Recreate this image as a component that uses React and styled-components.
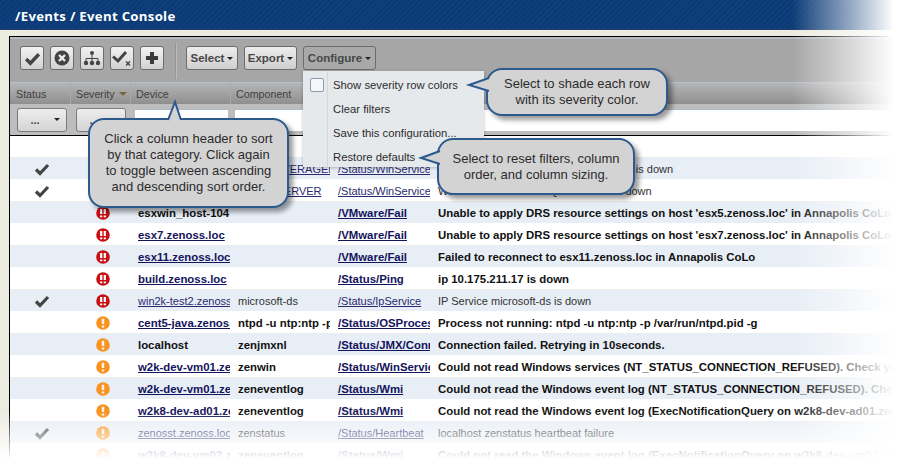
import React from "react";
import styled, { createGlobalStyle } from "styled-components";

const GlobalStyle = createGlobalStyle`
  html, body {
    margin: 0;
    padding: 0;
    background: #ffffff;
    font-family: "Liberation Sans", Arial, sans-serif;
  }
`;

const Page = styled.div`
  position: relative;
  width: 897px;
  height: 463px;
  overflow: hidden;
  background: #ecebe0;
`;

const TitleBar = styled.div`
  height: 30px;
  box-sizing: border-box;
  padding: 2px 0 0 15px;
  display: flex;
  align-items: center;
  border-bottom: 1px solid #1d3f6b;
  background: repeating-linear-gradient(135deg, #0c3a74 0 2px, #0f3f7c 2px 4px);
`;

const Title = styled.h1`
  margin: 0;
  font-family: "Open Sans", sans-serif;
  font-size: 13.2px;
  font-weight: 700;
  letter-spacing: 0.3px;
  color: #ffffff;
`;

const Panel = styled.div`
  margin: 6px 0 0 9px;
  border-top: 1px solid #000;
  border-left: 1px solid #000;
  background: #ffffff;
`;

const Toolbar = styled.div`
  height: 45px;
  box-sizing: border-box;
  padding: 7px 0 0 10px;
  display: flex;
  align-items: flex-start;
  gap: 6px;
  background: #a6a6a6;
  border-top: 2px solid #b3bac1;
`;

const IconButton = styled.button`
  width: 24px;
  height: 24px;
  padding: 0;
  display: flex;
  align-items: center;
  justify-content: center;
  border: 1px solid #6c6c6c;
  border-radius: 3px;
  background: linear-gradient(#f2f2f2, #d2d2d2);
`;

const Divider = styled.div`
  width: 1px;
  height: 36px;
  margin: -3px 3px 0 5px;
  background: #bcbcbc;
  border-left: 1px solid #969696;
`;

const MenuButton = styled.button`
  height: 24px;
  width: ${(p) => p.$width}px;
  padding: 0;
  display: flex;
  align-items: center;
  justify-content: center;
  gap: 3px;
  border: 1px solid #6c6c6c;
  border-radius: 3px;
  background: ${(p) =>
    p.$open ? "#a9a9a9" : "linear-gradient(#ededed, #cfcfcf)"};
  font-family: "Liberation Sans", sans-serif;
  font-size: 11.5px;
  font-weight: 700;
  color: #474747;
`;

const Caret = styled.span`
  width: 0;
  height: 0;
  border-left: 3px solid transparent;
  border-right: 3px solid transparent;
  border-top: 3px solid #222;
`;

const HeaderRow = styled.div`
  height: 21px;
  display: grid;
  grid-template-columns: 60px 60px 100px 100px 100px 1fr;
  align-items: center;
  border-top: 1px solid #b4c0cc;
  background: linear-gradient(#b5b5b5, #8f8f8f);
`;

const HeaderCell = styled.div`
  height: 100%;
  box-sizing: border-box;
  padding-left: ${(p) => (p.$first ? 6 : 5)}px;
  display: flex;
  align-items: center;
  gap: 4px;
  border-left: ${(p) => (p.$first ? "none" : "1px solid #a9a9a9")};
  font-size: 10.7px;
  color: #3f3f3f;
`;

const SortMark = styled.span`
  width: 0;
  height: 0;
  border-left: 4px solid transparent;
  border-right: 4px solid transparent;
  border-top: 4px solid #7a6340;
`;

const FilterRow = styled.div`
  height: 32px;
  box-sizing: border-box;
  display: grid;
  grid-template-columns: 60px 60px 100px 100px 100px 1fr;
  align-items: center;
  background: #bdbdbd;
  border-bottom: 1px solid #000;
`;

const FilterSlot = styled.div`
  padding: 0 ${(p) => (p.$last ? "0" : "2px")} 0 ${(p) => p.$left}px;
`;

const FilterSelect = styled.div`
  width: 50px;
  height: 24px;
  box-sizing: border-box;
  display: flex;
  align-items: center;
  justify-content: center;
  gap: 14px;
  border: 1px solid #7b7b7b;
  border-radius: 3px;
  background: linear-gradient(#eeeeee, #d4d4d4);
  font-size: 11px;
  font-weight: 700;
  color: #444;
  padding-left: 6px;
`;

const FilterInput = styled.div`
  height: 21px;
  border-top: 1px solid #a9bacb;
  background: #ffffff;
`;

const SpacerRow = styled.div`
  height: 22px;
  box-sizing: border-box;
  background: #ffffff;
  border-bottom: 1px solid #ececec;
`;

const Row = styled.div`
  height: 22px;
  box-sizing: border-box;
  display: grid;
  grid-template-columns: 60px 60px 100px 100px 100px 1fr;
  align-items: center;
  background: ${(p) => (p.$alt ? "#e7eef6" : "#ffffff")};
  border-bottom: 1px solid ${(p) => (p.$alt ? "#ffffff" : "#ececec")};
  font-size: ${(p) => (p.$bold ? 11.4 : 11)}px;
  font-weight: ${(p) => (p.$bold ? 700 : 400)};
  color: ${(p) => (p.$bold ? "#111" : "#333")};
`;

const IconCell = styled.div`
  display: flex;
  justify-content: center;
  align-items: center;
  padding-left: ${(p) => p.$shift}px;
`;

const TextCell = styled.div`
  overflow: hidden;
  white-space: nowrap;
  padding: 1px 0 0 8px;
`;

const RowLink = styled.a`
  color: ${(p) => (p.$bold ? "#14145c" : "#2a2a6c")};
  text-decoration: underline;
`;

const Menu = styled.div`
  position: absolute;
  left: 303px;
  top: 71px;
  width: 181px;
  height: 96px;
  background: linear-gradient(90deg, #e6e9ec 24px, #d4d7da 24px, #d4d7da 25px, #e6e9ec 25px);
  box-shadow: 0 1px 3px rgba(0, 0, 0, 0.25);
  display: flex;
  flex-direction: column;
  padding: 2px 0 0 30px;
  box-sizing: border-box;
`;

const MenuItem = styled.div`
  position: relative;
  height: 24px;
  flex: none;
  display: flex;
  align-items: center;
  font-size: 11.3px;
  color: #2c2c2c;
`;

const MenuCheck = styled.span`
  position: absolute;
  left: -23px;
  top: 5px;
  width: 12px;
  height: 12px;
  border: 1px solid #8a9bb0;
  border-radius: 2px;
  background: #f4f6fa;
`;

const Callout = styled.div`
  position: absolute;
  left: ${(p) => p.$x}px;
  top: ${(p) => p.$y}px;
  width: ${(p) => p.$w}px;
  height: ${(p) => p.$h}px;
  box-sizing: border-box;
  display: flex;
  flex-direction: column;
  align-items: center;
  justify-content: center;
  background: #d3d3d3;
  border: 2px solid #2c5a8c;
  border-radius: 16px;
  box-shadow: 4px 4px 5px rgba(0, 0, 0, 0.4);
  font-size: 13px;
  line-height: 16px;
  color: #2b2b2b;
  text-align: center;
`;

const Tail = styled.svg`
  position: absolute;
  overflow: visible;
  left: ${(p) => p.$x}px;
  top: ${(p) => p.$y}px;
`;

const FadeRight = styled.div`
  position: absolute;
  top: 0;
  right: 0;
  bottom: 0;
  width: 105px;
  background: linear-gradient(90deg, rgba(255, 255, 255, 0), rgba(255, 255, 255, 0.55) 55%, #fff 97%);
`;

const FadeBottom = styled.div`
  position: absolute;
  left: 0;
  right: 0;
  bottom: 0;
  height: 52px;
  background: linear-gradient(rgba(255, 255, 255, 0), rgba(255, 255, 255, 0.45) 40%, #fff 92%);
`;

const Check = ({ size = 16, color = "#444" }) => (
  <svg width={size} height={size} viewBox="0 0 16 16">
    <path d="M2 8.5 L6 12.5 L14 4" fill="none" stroke={color} strokeWidth="3.2" />
  </svg>
);

const CloseCircle = () => (
  <svg width="16" height="16" viewBox="0 0 16 16">
    <circle cx="8" cy="8" r="7.5" fill="#444" />
    <path d="M5 5 L11 11 M11 5 L5 11" stroke="#eee" strokeWidth="2.4" />
  </svg>
);

const Tree = () => (
  <svg width="18" height="16" viewBox="0 0 18 16">
    <rect x="7" y="1" width="4" height="4" rx="2" fill="#444" />
    <path d="M9 5 V11 M3 11 V8.5 H15 V11" fill="none" stroke="#444" strokeWidth="1" />
    <circle cx="3" cy="13" r="2.2" fill="#444" />
    <circle cx="9" cy="13" r="2.2" fill="#444" />
    <circle cx="15" cy="13" r="2.2" fill="#444" />
  </svg>
);

const CheckX = () => (
  <svg width="20" height="18" viewBox="0 0 20 18">
    <path d="M1 7.5 L6 12 L14 3" fill="none" stroke="#444" strokeWidth="3" />
    <path d="M14 12.5 L18 16.5 M18 12.5 L14 16.5" stroke="#444" strokeWidth="1.4" />
  </svg>
);

const Plus = () => (
  <svg width="14" height="14" viewBox="0 0 14 14">
    <path d="M7 1 V13 M1 7 H13" stroke="#3a3a3a" strokeWidth="4" />
  </svg>
);

const Severity = ({ level }) => (
  <svg width="14" height="14" viewBox="0 0 14 14">
    <circle cx="7" cy="7" r="6.8" fill={level === "critical" ? "#c70f14" : "#f9921e"} />
    {level === "critical" ? (
      <path d="M5.2 3 V8 M8.8 3 V8 M5.2 9.5 V11.2 M8.8 9.5 V11.2" stroke="#fff" strokeWidth="2.2" />
    ) : (
      <path d="M7 2.8 V8 M7 9.5 V11.4" stroke="#fff" strokeWidth="2.5" opacity="0.92" />
    )}
  </svg>
);

const rows = [
  { ack: true, sev: "error", device: "w2k-test.zenoss.loc", link: true, comp: "SQLSERVERAGENT", compLink: true, cls: "/Status/WinService", sum: "Windows service 'SQLSERVERAGENT' is down" },
  { ack: true, sev: "error", device: "w2k-test.zenoss.loc", link: true, comp: "MSSQLSERVER", compLink: true, cls: "/Status/WinService", sum: "Windows service 'MSSQLSERVER' is down" },
  { bold: true, sev: "critical", device: "esxwin_host-104", cls: "/VMware/Fail", sum: "Unable to apply DRS resource settings on host 'esx5.zenoss.loc' in Annapolis CoLo" },
  { bold: true, sev: "critical", device: "esx7.zenoss.loc", link: true, cls: "/VMware/Fail", sum: "Unable to apply DRS resource settings on host 'esx7.zenoss.loc' in Annapolis CoLo" },
  { bold: true, sev: "critical", device: "esx11.zenoss.loc", link: true, cls: "/VMware/Fail", sum: "Failed to reconnect to esx11.zenoss.loc in Annapolis CoLo" },
  { bold: true, sev: "critical", device: "build.zenoss.loc", link: true, cls: "/Status/Ping", sum: "ip 10.175.211.17 is down" },
  { ack: true, sev: "critical", device: "win2k-test2.zenoss.loc", link: true, comp: "microsoft-ds", cls: "/Status/IpService", sum: "IP Service microsoft-ds is down" },
  { bold: true, sev: "error", device: "cent5-java.zenoss.loc", link: true, comp: "ntpd -u ntp:ntp -p /var/run", cls: "/Status/OSProcess", sum: "Process not running: ntpd -u ntp:ntp -p /var/run/ntpd.pid -g" },
  { bold: true, sev: "error", device: "localhost", comp: "zenjmxnl", cls: "/Status/JMX/Connection", sum: "Connection failed. Retrying in 10seconds." },
  { bold: true, sev: "error", device: "w2k-dev-vm01.zenoss.loc", link: true, comp: "zenwin", cls: "/Status/WinService", sum: "Could not read Windows services (NT_STATUS_CONNECTION_REFUSED). Check your username/password" },
  { bold: true, sev: "error", device: "w2k-dev-vm01.zenoss.loc", link: true, comp: "zeneventlog", cls: "/Status/Wmi", sum: "Could not read the Windows event log (NT_STATUS_CONNECTION_REFUSED). Check your username" },
  { bold: true, sev: "error", device: "w2k8-dev-ad01.zenoss.loc", link: true, comp: "zeneventlog", cls: "/Status/Wmi", sum: "Could not read the Windows event log (ExecNotificationQuery on w2k8-dev-ad01.zenoss.loc failed" },
  { ack: true, sev: "error", device: "zenosst.zenoss.loc", link: true, comp: "zenstatus", cls: "/Status/Heartbeat", sum: "localhost zenstatus heartbeat failure" },
  { bold: true, sev: "error", device: "w2k8-dev-vm02.zenoss.loc", link: true, comp: "zeneventlog", cls: "/Status/Wmi", sum: "Could not read the Windows event log (ExecNotificationQuery on w2k8-dev-vm02.zenoss.loc failed" },
];

const headers = ["Status", "Severity", "Device", "Component", "", ""];

function App() {
  return (
    <Page>
      <GlobalStyle />
      <TitleBar>
        <Title>/Events / Event Console</Title>
      </TitleBar>
      <Panel>
        <Toolbar>
          <IconButton><Check size={17} /></IconButton>
          <IconButton><CloseCircle /></IconButton>
          <IconButton><Tree /></IconButton>
          <IconButton><CheckX /></IconButton>
          <IconButton><Plus /></IconButton>
          <Divider />
          <MenuButton $width={52}>Select<Caret /></MenuButton>
          <MenuButton $width={53}>Export<Caret /></MenuButton>
          <MenuButton $width={73} $open>Configure<Caret /></MenuButton>
        </Toolbar>
        <HeaderRow>
          {headers.map((h, i) => (
            <HeaderCell key={i} $first={i === 0}>
              {h}
              {h === "Severity" && <SortMark />}
            </HeaderCell>
          ))}
        </HeaderRow>
        <FilterRow>
          <FilterSlot $left={7}>
            <FilterSelect>...<Caret /></FilterSelect>
          </FilterSlot>
          <FilterSlot $left={6}>
            <FilterSelect>...<Caret /></FilterSelect>
          </FilterSlot>
          <FilterSlot $left={5}><FilterInput /></FilterSlot>
          <FilterSlot $left={5}><FilterInput /></FilterSlot>
          <FilterSlot $left={5}><FilterInput /></FilterSlot>
          <FilterSlot $left={5} $last><FilterInput /></FilterSlot>
        </FilterRow>
        <SpacerRow />
        {rows.map((r, i) => (
          <Row key={i} $alt={i % 2 === 0} $bold={r.bold}>
            <IconCell $shift={4}>{r.ack && <Check />}</IconCell>
            <IconCell $shift={6}>
              <Severity level={r.sev} />
            </IconCell>
            <TextCell>
              {r.link ? <RowLink $bold={r.bold}>{r.device}</RowLink> : r.device}
            </TextCell>
            <TextCell>
              {r.compLink ? <RowLink $bold={r.bold}>{r.comp}</RowLink> : r.comp}
            </TextCell>
            <TextCell>
              <RowLink $bold={r.bold}>{r.cls}</RowLink>
            </TextCell>
            <TextCell>{r.sum}</TextCell>
          </Row>
        ))}
      </Panel>

      <Menu>
        <MenuItem><MenuCheck />Show severity row colors</MenuItem>
        <MenuItem>Clear filters</MenuItem>
        <MenuItem>Save this configuration...</MenuItem>
        <MenuItem>Restore defaults</MenuItem>
      </Menu>

      <FadeRight />
      <FadeBottom />

      <Callout $x={88} $y={118} $w={201} $h={90}>
        <div>Click a column header to sort</div>
        <div>by that category. Click again</div>
        <div>to toggle between ascending</div>
        <div>and descending sort order.</div>
      </Callout>
      <Tail $x={166} $y={100} width="20" height="20">
        <path d="M2 20 L9 2 L15 20" fill="#d3d3d3" stroke="#2c5a8c" strokeWidth="2" />
      </Tail>

      <Callout $x={486} $y={68} $w={182} $h={48}>
        <div>Select to shade each row</div>
        <div>with its severity color.</div>
      </Callout>
      <Tail $x={467} $y={76} width="22" height="18">
        <path d="M22 2 L2 9 L22 15" fill="#d3d3d3" stroke="#2c5a8c" strokeWidth="2" />
      </Tail>

      <Callout $x={437} $y={138} $w={198} $h={57}>
        <div>Select to reset filters, column</div>
        <div>order, and column sizing.</div>
      </Callout>
      <Tail $x={420} $y={149} width="20" height="18">
        <path d="M20 2 L1 9 L20 15" fill="#d3d3d3" stroke="#2c5a8c" strokeWidth="2" />
      </Tail>
    </Page>
  );
}

export default App;
